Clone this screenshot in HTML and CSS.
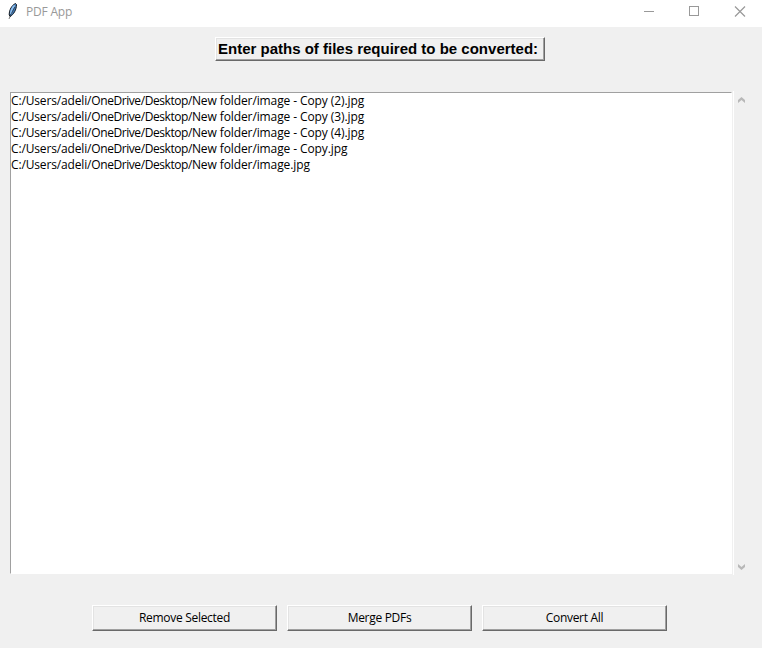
FILE: index.html
```html
<!DOCTYPE html>
<html lang="en">
<head>
<meta charset="utf-8">
<title>PDF App</title>
<link rel="stylesheet" href="styles.css">
</head>
<body>
<div class="window">
  <header class="titlebar">
    <svg class="feather" width="12" height="18" viewBox="0 0 12 18">
      <path d="M8.500 1.500C5 3.200 2.200 7.500 2.200 13l1 1.500C6.500 12.500 9.500 8 9.500 2.500z" fill="#3f78b5" stroke="#111820" stroke-width="1"/>
      <path d="M7.800 3.500C5.500 5.500 4 9 3.800 12" fill="none" stroke="#8cc0f4" stroke-width="1.800"/>
      <path d="M8 4.500C6.500 8 4 11 2 17" fill="none" stroke="#222" stroke-width=".6"/>
    </svg>
    <span class="title">PDF App</span>
    <svg class="controls" width="104" height="12" viewBox="0 0 104 12" fill="none" stroke="#999">
      <path d="M0 5.500h10M45.500.5h9v9h-9z" shape-rendering="crispEdges"/>
      <path d="M91 .5l10 10M101 .5l-10 10" stroke-width="1.200"/>
    </svg>
  </header>
  <main class="content">
    <h1 class="heading raised"><span>Enter paths of files required to be converted:</span></h1>
    <section class="files">
      <ul class="list">
        <li><span class="home">C:/Users/adeli/</span><span class="desktop">OneDrive/Desktop/</span>New folder/image - Copy (2).jpg</li>
        <li><span class="home">C:/Users/adeli/</span><span class="desktop">OneDrive/Desktop/</span>New folder/image - Copy (3).jpg</li>
        <li><span class="home">C:/Users/adeli/</span><span class="desktop">OneDrive/Desktop/</span>New folder/image - Copy (4).jpg</li>
        <li><span class="home">C:/Users/adeli/</span><span class="desktop">OneDrive/Desktop/</span>New folder/image - Copy.jpg</li>
        <li><span class="home">C:/Users/adeli/</span><span class="desktop">OneDrive/Desktop/</span>New folder/image.jpg</li>
      </ul>
      <div class="scrollbar">
        <svg width="7" height="6" viewBox="0 0 7 6"><path d="M0 3L3.500 0 7 3V6L3.500 3 0 6z" fill="#b8b8b8"/></svg>
        <svg width="7" height="6" viewBox="0 0 7 6"><path d="M0 0L3.500 3 7 0v3L3.500 6 0 3z" fill="#b8b8b8"/></svg>
      </div>
    </section>
    <footer class="actions">
      <button class="raised"><span>Remove Selected</span></button>
      <button class="raised"><span>Merge PDFs</span></button>
      <button class="raised"><span>Convert All</span></button>
    </footer>
  </main>
</div>
</body>
</html>
```
FILE: styles.css
```css
* { box-sizing: border-box; }
body {
  margin: 0;
  background: #f0f0f0;
  color: #000;
  font: 12px/16px "Open Sans", "Noto Sans", sans-serif;
}
.window { width: 762px; height: 648px; overflow: hidden; }
.titlebar {
  display: flex;
  height: 27px;
  padding: 2px 14px 0 7px;
  background: #fff;
  color: #999;
}
.title { margin: 2px 0 0 7px; letter-spacing: -.2px; }
.controls { margin: 4px 0 0 auto; }
.content { padding: 10px 10px 0; }
.raised {
  border: 1px solid;
  border-color: #fff #696969 #696969 #fff;
  background: #f0f0f0;
  box-shadow: inset -1px -1px #a0a0a0, inset 1px 1px #e3e3e3;
}
.heading {
  width: 330px;
  height: 24px;
  margin: 0 0 0 205px;
  padding-left: 2px;
  font: bold 15px/22px "Liberation Sans", Arial, sans-serif;
  white-space: nowrap;
}
.files { display: flex; gap: 1px; margin-top: 30px; }
.list {
  width: 722px;
  height: 482px;
  margin: 1px 0 0;
  padding: 0;
  list-style: none;
  border: 1px solid;
  border-color: #a0a0a0 #fff #fff #a0a0a0;
  background: #fff;
  white-space: nowrap;
}
.list li { letter-spacing: -.1px; }
.home { letter-spacing: -.15px; }
.desktop { letter-spacing: -.43px; }
.scrollbar {
  display: flex;
  flex-direction: column;
  justify-content: space-between;
  width: 17px;
  height: 484px;
  padding: 6px 0 5px 4px;
  border-left: 1px solid #fff;
}
.actions { display: flex; gap: 10px; margin: 30px 0 0 82px; }
.actions button {
  width: 185px;
  height: 26px;
  padding: 0;
  font: inherit;
  color: inherit;
  letter-spacing: -.3px;
}
```
